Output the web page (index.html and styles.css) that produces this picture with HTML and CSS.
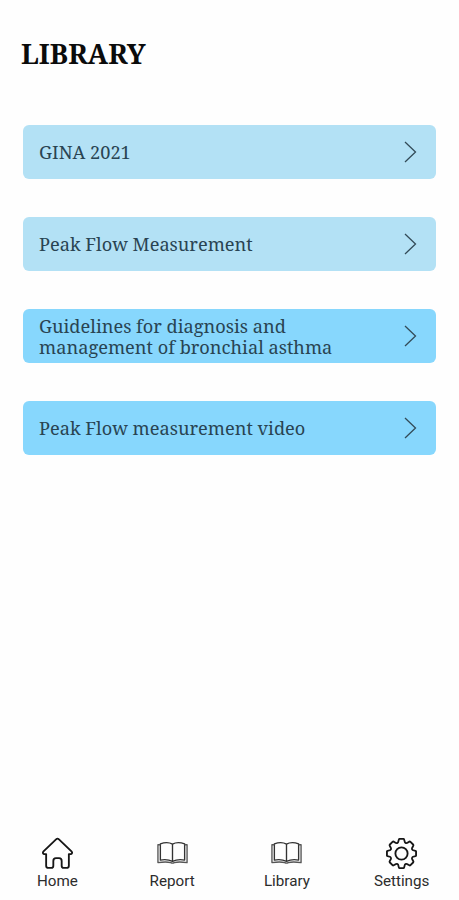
FILE: index.html
```html
<!DOCTYPE html>
<html lang="en">
<head>
    <meta charset="UTF-8">
    <meta name="viewport" content="width=device-width, initial-scale=1.0">
    <title>Library</title>
    <link rel="stylesheet" href="styles.css">
</head>
<body>

    <main class="library">
        <h1>LIBRARY</h1>
        <div class="list">
            <a class="item item-light">
                <span>GINA 2021</span>
                <svg class="arrow" viewBox="0 0 13 22"><path d="M1 1l10.5 10L1 21"/></svg>
            </a>
            <a class="item item-light">
                <span>Peak Flow Measurement</span>
                <svg class="arrow" viewBox="0 0 13 22"><path d="M1 1l10.5 10L1 21"/></svg>
            </a>
            <a class="item">
                <span>Guidelines for diagnosis and management of bronchial asthma</span>
                <svg class="arrow" viewBox="0 0 13 22"><path d="M1 1l10.5 10L1 21"/></svg>
            </a>
            <a class="item">
                <span>Peak Flow measurement video</span>
                <svg class="arrow" viewBox="0 0 13 22"><path d="M1 1l10.5 10L1 21"/></svg>
            </a>
        </div>
    </main>

    <nav class="navbar">
        <a class="tab">
            <svg class="icon" viewBox="0 0 34 34"><path d="M15.5 2.4L2.6 14.8C1.4 16 2 17.6 3.6 17.6H5.3V29.5Q5.3 31.8 7.6 31.8H10.6Q12.7 31.8 12.7 29.5V24.7Q12.7 21.8 15.4 21.8H18.6Q21.3 21.8 21.3 24.7V29.5Q21.3 31.8 23.4 31.8H26.4Q28.7 31.8 28.7 29.5V17.6H30.4C32 17.6 32.6 16 31.4 14.8L18.5 2.4Q17 1 15.5 2.4Z"/></svg>
            <span>Home</span>
        </a>
        <a class="tab">
            <svg class="icon icon-book" viewBox="0 0 34 34"><path d="M4.5 7Q12 4.4 17 7.4Q22 4.4 29.5 7V23.8Q22.5 22.4 17 25.2Q11.5 22.4 4.5 23.8ZM17 7.4V25.2"/><path class="pages" d="M4.5 8H2V26.4Q10.5 25.2 15.2 26.4Q17 27.4 18.8 26.4Q23.5 25.2 32 26.4V8H29.5"/></svg>
            <span>Report</span>
        </a>
        <a class="tab">
            <svg class="icon icon-book" viewBox="0 0 34 34"><path d="M4.5 7Q12 4.4 17 7.4Q22 4.4 29.5 7V23.8Q22.5 22.4 17 25.2Q11.5 22.4 4.5 23.8ZM17 7.4V25.2"/><path class="pages" d="M4.5 8H2V26.4Q10.5 25.2 15.2 26.4Q17 27.4 18.8 26.4Q23.5 25.2 32 26.4V8H29.5"/></svg>
            <span>Library</span>
        </a>
        <a class="tab">
            <svg class="icon" viewBox="-17 -17 34 34"><circle r="6.3"/><path d="M-2.2-15H2.2C3.4-15 2.4-11.4 4.4-10.8C6.2-10.1 8-13.2 9-12.2L12.2-9C13.2-8 10.1-6.2 10.8-4.4C11.4-2.4 15-3.4 15-2.2V2.2C15 3.4 11.4 2.4 10.8 4.4C10.1 6.2 13.2 8 12.2 9L9 12.2C8 13.2 6.2 10.1 4.4 10.8C2.4 11.4 3.4 15 2.2 15H-2.2C-3.4 15-2.4 11.4-4.4 10.8C-6.2 10.1-8 13.2-9 12.2L-12.2 9C-13.2 8-10.1 6.2-10.8 4.4C-11.4 2.4-15 3.4-15 2.2V-2.2C-15-3.4-11.4-2.4-10.8-4.4C-10.1-6.2-13.2-8-12.2-9L-9-12.2C-8-13.2-6.2-10.1-4.4-10.8C-2.4-11.4-3.4-15-2.2-15Z"/></svg>
            <span>Settings</span>
        </a>
    </nav>

</body>
</html>
```

FILE: styles.css
```css
* { box-sizing: border-box; }
body { margin: 0; height: 900px; display: flex; flex-direction: column; justify-content: space-between; background: #fefefe; font-family: "Noto Serif", "DejaVu Serif Condensed", "DejaVu Serif", serif; }
.library { padding: 34px 23px 0; }
h1 { margin: 0 0 0 -2px; font-size: 27.3px; line-height: 40px; font-weight: bold; color: #0b0b0b; }
.list { display: flex; flex-direction: column; gap: 38px; margin-top: 51px; }
.item { display: flex; align-items: center; justify-content: space-between; height: 54px; padding: 1px 19px 0 16px; border-radius: 6px; background: #87d7fd; color: #294452; font-size: 18.2px; line-height: 21px; }
.item span { width: 310px; }
.item-light { background: #b3e1f5; }
.arrow { width: 13px; height: 22px; margin-bottom: 2px; fill: none; stroke: #334b58; stroke-width: 1.3; }
.navbar { display: flex; height: 64px; }
.tab { flex: 1; display: flex; flex-direction: column; align-items: center; font-family: Roboto, sans-serif; font-size: 15.2px; line-height: 18px; color: #2c2c2c; }
.icon { width: 33px; height: 33px; margin: 1px 0 2px; fill: none; stroke: #161616; stroke-width: 1.9; stroke-linejoin: round; }
.icon-book { stroke: #333; stroke-width: 1.4; }
.pages { stroke: #555; stroke-width: 1.4; }
```
